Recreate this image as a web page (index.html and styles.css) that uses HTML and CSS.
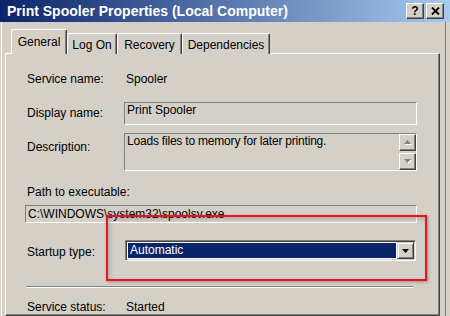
FILE: index.html
```html
<!DOCTYPE html>
<html>
<head>
<meta charset="utf-8">
<link rel="stylesheet" href="styles.css">
</head>
<body>
<div class="window">
  <div class="titlebar">
    <span class="title">Print Spooler Properties (Local Computer)</span>
    <div class="tb-buttons">
      <span class="tbtn help">?</span>
      <span class="tbtn close"><svg width="9" height="8" viewBox="0 0 9 8"><path d="M1 0.5L8 7.5M8 0.5L1 7.5" stroke="#000" stroke-width="1.8"/></svg></span>
    </div>
  </div>
  <div class="body">
    <div class="tabs">
      <div class="tab active t-general">General</div>
      <div class="tab t-logon">Log On</div>
      <div class="tab t-recovery">Recovery</div>
      <div class="tab t-deps">Dependencies</div>
    </div>
    <div class="panel">
      <div class="row r-service"><span class="label">Service name:</span><span class="value">Spooler</span></div>
      <div class="row r-display"><span class="label lbl-display">Display name:</span><div class="field f-display">Print Spooler</div></div>
      <div class="row r-desc"><span class="label lbl-desc">Description:</span>
        <div class="field f-desc">
          <span class="desc-text">Loads files to memory for later printing.</span>
          <div class="scroll">
            <span class="sbtn"><svg width="8" height="5" viewBox="0 0 8 5"><path d="M4.5 1L8 5H1z" fill="#fff"/><path d="M3.5 0L7 4H0z" fill="#808080"/></svg></span>
            <span class="sbtn"><svg width="8" height="5" viewBox="0 0 8 5"><path d="M1 1H8L4.5 5z" fill="#fff"/><path d="M0 0H7L3.5 4z" fill="#808080"/></svg></span>
          </div>
        </div>
      </div>
      <div class="path-label">Path to executable:</div>
      <div class="field f-path">C:\WINDOWS\system32\spoolsv.exe</div>
      <div class="row r-startup"><span class="label lbl-startup">Startup type:</span>
        <div class="combo">
          <span class="combo-text">Automatic</span>
          <span class="combo-btn"><svg width="7" height="4" viewBox="0 0 7 4"><path d="M0 0H7L3.5 4z" fill="#000"/></svg></span>
        </div>
      </div>
      <div class="sep"></div>
      <div class="row r-status"><span class="label">Service status:</span><span class="value">Started</span></div>
      <div class="highlight"></div>
    </div>
  </div>
</div>
</body>
</html>
```
FILE: styles.css
```css
* { box-sizing: border-box; }
html, body { margin: 0; padding: 0; }
body {
  width: 450px;
  height: 316px;
  overflow: hidden;
  background: #d4d0c8;
  font-family: "Liberation Sans", Arial, sans-serif;
  font-size: 12px;
  color: #000;
}
.window { height: 316px; display: flex; flex-direction: column; }
.titlebar {
  height: 22px;
  flex: none;
  display: flex;
  align-items: center;
  padding: 0 6px 0 7px;
  background: linear-gradient(to right, #0a246a 0%, #a6caf0 100%);
}
.title {
  flex: 1;
  color: #fff;
  font-weight: bold;
  font-size: 14px;
  white-space: nowrap;
}
.tb-buttons { display: flex; gap: 2px; }
.tbtn {
  width: 18px;
  height: 16px;
  background: #d4d0c8;
  border: 1px solid;
  border-color: #fff #404040 #404040 #fff;
  box-shadow: inset -1px -1px #808080;
  display: flex;
  align-items: center;
  justify-content: center;
  font-weight: bold;
  font-size: 12px;
  line-height: 12px;
}
.body {
  flex: 1;
  display: flex;
  flex-direction: column;
  margin: 0 4px 0 1px;
  padding: 7px 5px 0 3px;
  border-left: 1px solid #fff;
  border-right: 1px solid #808080;
}
.tabs {
  display: flex;
  align-items: flex-end;
  height: 25px;
  padding-left: 6px;
  position: relative;
  z-index: 1;
  margin-bottom: -1px;
}
.tab {
  height: 21px;
  border-top: 1px solid #fff;
  border-left: 1px solid #fff;
  border-right: 1px solid #404040;
  box-shadow: inset -1px 0 #808080;
  border-radius: 2px 2px 0 0;
  text-align: center;
  padding-top: 3px;
  line-height: 16px;
  background: #d4d0c8;
}
.tab.active { height: 25px; padding-top: 5px; line-height: 14px; }
.t-general { width: 56px; }
.t-logon { width: 50px; }
.t-recovery { width: 65px; }
.t-deps { width: 88px; }
.panel {
  flex: 1;
  position: relative;
  border: 1px solid;
  border-color: #fff #404040 #404040 #fff;
  box-shadow: inset -1px -1px #808080;
  padding: 0 22px 0 21px;
}
.row { display: flex; align-items: flex-start; }
.label { width: 97px; flex: none; line-height: 14px; white-space: nowrap; }
.value { padding-left: 2px; line-height: 14px; }
.r-service { margin-top: 18px; height: 14px; }
.r-display { margin-top: 16px; height: 23px; }
.lbl-display { padding-top: 4px; }
.field {
  border: 1px solid;
  border-color: #808080 #fff #fff #808080;
  background: #d4d0c8;
  line-height: 14px;
  white-space: nowrap;
}
.f-display { flex: 1; height: 23px; padding: 0 2px; }
.r-desc { margin-top: 8px; height: 38px; }
.lbl-desc { padding-top: 7px; }
.f-desc { flex: 1; height: 38px; display: flex; padding-left: 2px; }
.desc-text { flex: 1; letter-spacing: -0.2px; }
.scroll {
  width: 17px;
  display: flex;
  flex-direction: column;
  justify-content: space-between;
}
.sbtn {
  height: 17px;
  border: 1px solid;
  border-color: #fff #404040 #404040 #fff;
  box-shadow: inset -1px -1px #808080;
  display: flex;
  align-items: center;
  justify-content: center;
}
.path-label { margin-top: 14px; line-height: 14px; height: 14px; }
.f-path {
  margin: 6px 0 0 -2px;
  height: 18px;
  line-height: 16px;
  padding-left: 2px;
}
.r-startup { margin-top: 17px; height: 21px; }
.lbl-startup { padding-top: 5px; }
.combo {
  flex: 1;
  margin: 0 1px 0 1px;
  height: 21px;
  display: flex;
  border: 1px solid;
  border-color: #808080 #fff #fff #808080;
  box-shadow: inset 1px 1px #404040, inset -1px -1px #d4d0c8;
  background: #fff;
  padding: 1px;
}
.combo-text {
  flex: 1;
  margin: 1px;
  background: #0a246a;
  color: #fff;
  line-height: 15px;
  padding-left: 2px;
}
.combo-btn {
  width: 17px;
  border: 1px solid;
  border-color: #d4d0c8 #404040 #404040 #d4d0c8;
  box-shadow: inset 1px 1px #fff, inset -1px -1px #808080;
  background: #d4d0c8;
  display: flex;
  align-items: center;
  justify-content: center;
}
.sep {
  margin: 25px 4px 0 -1px;
  height: 2px;
  border-top: 1px solid #808080;
  border-bottom: 1px solid #fff;
}
.r-status { margin-top: 12px; height: 14px; }
.highlight {
  position: absolute;
  left: 100px;
  top: 161px;
  width: 321px;
  height: 66px;
  border: 2px solid #e8141c;
  box-shadow: 1px 1px 3px rgba(0,0,0,0.3), inset 2px 2px 4px rgba(0,0,0,0.18);
  pointer-events: none;
}
```
